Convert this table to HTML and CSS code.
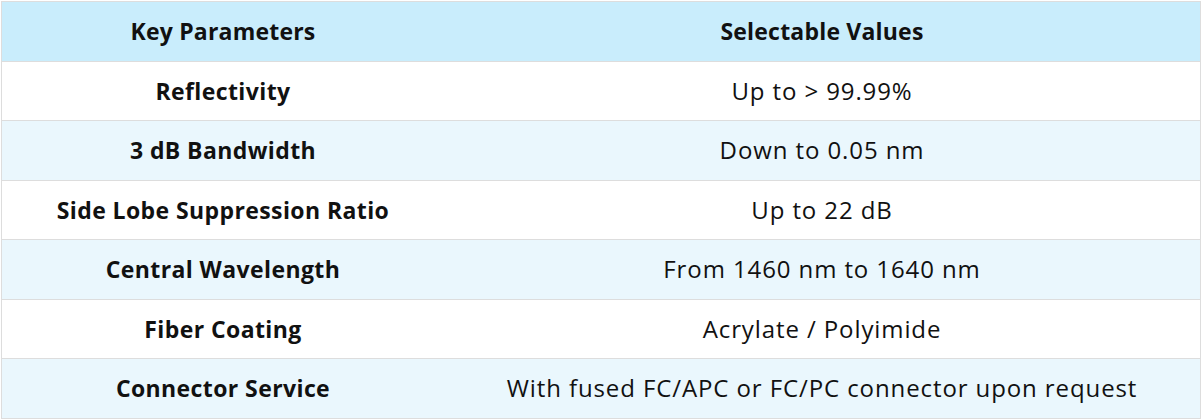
FILE: index.html
```html
<!DOCTYPE html>
<html>
<head>
<meta charset="utf-8">
<link rel="stylesheet" href="styles.css">
</head>
<body>
<table class="spec">
  <thead>
    <tr><th class="col-key">Key Parameters</th><th>Selectable Values</th></tr>
  </thead>
  <tbody>
    <tr><td class="key">Reflectivity</td><td>Up to &gt; 99.99%</td></tr>
    <tr class="alt"><td class="key">3 dB Bandwidth</td><td>Down to 0.05 nm</td></tr>
    <tr><td class="key">Side Lobe Suppression Ratio</td><td>Up to 22 dB</td></tr>
    <tr class="alt"><td class="key">Central Wavelength</td><td>From 1460 nm to 1640 nm</td></tr>
    <tr><td class="key">Fiber Coating</td><td>Acrylate / Polyimide</td></tr>
    <tr class="alt"><td class="key">Connector Service</td><td>With fused FC/APC or FC/PC connector upon request</td></tr>
  </tbody>
</table>
</body>
</html>
```
FILE: styles.css
```css
html, body {
  margin: 0;
  padding: 0;
  background: #ffffff;
}
body {
  padding: 1px 1px 0 1px;
  font-family: "Open Sans", Lato, sans-serif;
  color: #111111;
}
.spec {
  width: 1200px;
  border-collapse: collapse;
  border: 1px solid #dddddd;
  table-layout: fixed;
}
.spec .col-key {
  width: 426px;
}
.spec th, .spec td {
  height: 58.5px;
  padding: 0 8px;
  text-align: center;
  vertical-align: middle;
  font-size: 24px;
  letter-spacing: 0.9px;
  line-height: 30px;
  border-top: 1px solid #dddddd;
  border-bottom: 1px solid #dddddd;
}
.spec th {
  background: #c9edfc;
  font-weight: 700;
  font-size: 23px;
  letter-spacing: 0.2px;
}
.spec td {
  font-weight: 400;
}
.spec td.key {
  font-weight: 700;
  font-size: 23px;
  letter-spacing: 0.4px;
}
.spec tr.alt td {
  background: #eaf7fd;
}
```
